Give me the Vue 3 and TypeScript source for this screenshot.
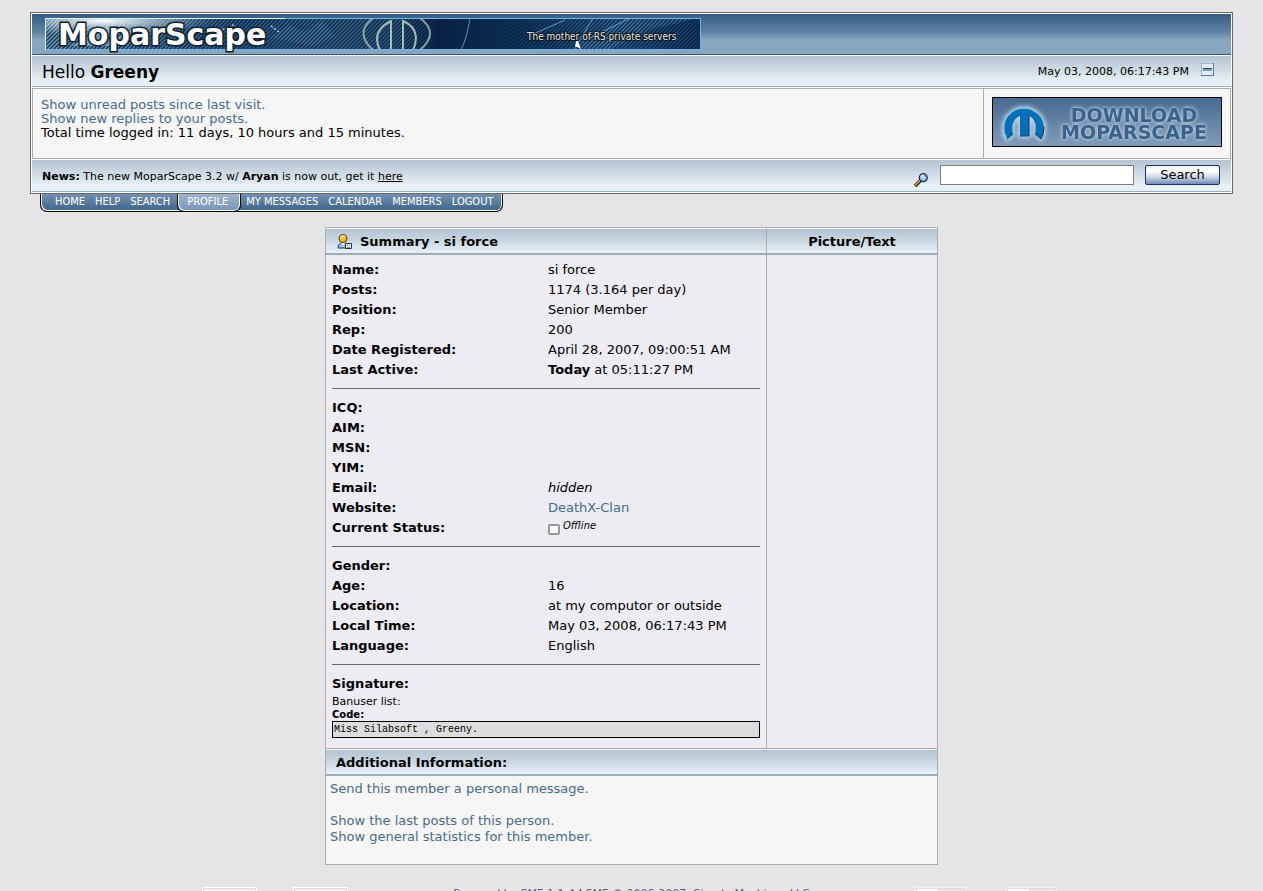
<script setup lang="ts">
interface Row {
  label: string
  value?: string
  lead?: string
  kind?: 'italic' | 'link' | 'status'
}

const menu: string[] = ['Home', 'Help', 'Search', 'Profile', 'My Messages', 'Calendar', 'Members', 'Logout']
const current = 'Profile'

const groups: Row[][] = [
  [
    { label: 'Name:', value: 'si force' },
    { label: 'Posts:', value: '1174 (3.164 per day)' },
    { label: 'Position:', value: 'Senior Member' },
    { label: 'Rep:', value: '200' },
    { label: 'Date Registered:', value: 'April 28, 2007, 09:00:51 AM' },
    { label: 'Last Active:', lead: 'Today', value: ' at 05:11:27 PM' },
  ],
  [
    { label: 'ICQ:' },
    { label: 'AIM:' },
    { label: 'MSN:' },
    { label: 'YIM:' },
    { label: 'Email:', value: 'hidden', kind: 'italic' },
    { label: 'Website:', value: 'DeathX-Clan', kind: 'link' },
    { label: 'Current Status:', value: 'Offline', kind: 'status' },
  ],
  [
    { label: 'Gender:' },
    { label: 'Age:', value: '16' },
    { label: 'Location:', value: 'at my computor or outside' },
    { label: 'Local Time:', value: 'May 03, 2008, 06:17:43 PM' },
    { label: 'Language:', value: 'English' },
  ],
]
</script>

<template>
  <div class="page">
    <header class="head">
      <div class="brand">
        <svg class="banner" width="656" height="32" viewBox="0 0 656 32" role="img" aria-label="MoparScape banner">
          <defs>
            <linearGradient id="sky" x1="0" x2="1" y1="0" y2="0">
              <stop offset="0" stop-color="#6d9dbc" />
              <stop offset=".12" stop-color="#5688ae" />
              <stop offset=".3" stop-color="#2c5b8b" />
              <stop offset=".45" stop-color="#36648c" />
              <stop offset=".54" stop-color="#2c5880" />
              <stop offset=".6" stop-color="#08264d" />
              <stop offset=".74" stop-color="#123c68" />
              <stop offset=".86" stop-color="#2b6294" />
              <stop offset="1" stop-color="#103a68" />
            </linearGradient>
            <radialGradient id="glow">
              <stop offset="0" stop-color="#fff" />
              <stop offset="1" stop-color="#bfe0f0" stop-opacity="0" />
            </radialGradient>
            <clipPath id="frame"><rect width="656" height="32" /></clipPath>
            <pattern id="hatch" width="4" height="4" patternUnits="userSpaceOnUse">
              <path d="M-1 1l2-2M0 4l4-4M3 5l2-2" stroke="#041a33" stroke-width="1.4" />
            </pattern>
          </defs>
          <g clip-path="url(#frame)">
            <rect width="656" height="32" fill="url(#sky)" />
            <path d="M225 20l20-14 14 8 18-12 12 16-20 10zM535 24l48-24h70l-50 12-40 20h-26z" fill="#5d93c4" opacity=".4" />
            <rect width="656" height="32" fill="url(#hatch)" opacity=".8" />
            <ellipse cx="58" cy="3" rx="110" ry="15" fill="url(#glow)" />
            <path d="M26 28L70 5 58 26l30-14-12 16z" fill="#d3edf5" opacity=".35" />
            <path d="M172 15l5-5 4 3 7-6 4 6 6-2M226 8l8 6" stroke="#a5d2ea" stroke-width="1.5" stroke-dasharray="2 2" fill="none" />
            <g fill="none" stroke="#a4bdb4" stroke-width="2">
              <path d="M328 0q-19 15 0 32M375 0q20 15 0 32" opacity=".8" />
              <path d="M346 2v30M358 32V3q12 5 13 16 0 7-3 13M346 3q-14 7-14 18 0 6 3 11" />
            </g>
            <path d="M425 0q-3 20-9 32M548 0l-15 25-4 7M585 0l-40 20M484 18l36-16" stroke="#82bdeb" fill="none" opacity=".7" />
            <path d="M532 20l4 11-6-3z" fill="#fff" />
            <rect x=".5" y=".5" width="655" height="31" fill="none" stroke="#6eb6e8" />
            <path d="M.5 32V.5H240" stroke="#d9f5ff" fill="none" />
          </g>
          <text class="banner-name" x="13" y="27">MoparScape</text>
          <text class="banner-tag" x="482" y="22">The mother of RS private servers</text>
        </svg>
      </div>

      <div class="greeting bar">
        <span class="hello">Hello <b>Greeny</b></span>
        <span class="date">May 03, 2008, 06:17:43 PM</span>
        <button class="collapse" type="button" aria-label="Shrink or expand the header">
          <svg width="13" height="13" viewBox="0 0 13 13" shape-rendering="crispEdges">
            <path d="M0 0h13v13H0z" fill="#5a7d9f" />
            <path d="M0 0h12v1H1v11H0z" fill="#a2b7c8" />
            <path d="M1 1h11v11H1z" fill="#e3ebf2" />
            <path d="M2 5h9v3H2z" fill="#7c9cba" /><path d="M2 5h9v1H2z" fill="#27527a" />
          </svg>
        </button>
      </div>

      <div class="info">
        <div class="links">
          <a href="#unread">Show unread posts since last visit.</a><br />
          <a href="#replies">Show new replies to your posts.</a><br />
          Total time logged in: 11 days, 10 hours and 15 minutes.
        </div>
        <div class="promo">
          <a class="download" href="#download" aria-label="Download MoparScape">
            <svg width="228" height="48" viewBox="0 0 228 48">
              <defs>
                <linearGradient id="steel" x2="0" y2="1">
                  <stop offset="0" stop-color="#486b91" />
                  <stop offset="1" stop-color="#809bb9" />
                </linearGradient>
                <filter id="halo" x="-30%" y="-30%" width="160%" height="160%">
                  <feGaussianBlur stdDeviation="2" />
                </filter>
              </defs>
              <rect width="228" height="48" fill="url(#steel)" />
              <path d="M14 41A20 20 0 1 1 48 41L42 36Q45 22 36 18V38H27V18Q17 22 20 36Z" fill="#bfd4e8" stroke="#c4d8e9" stroke-width="4" filter="url(#halo)" />
              <path d="M14 41A20 20 0 1 1 48 41L42 36Q45 22 36 18V38H27V18Q17 22 20 36Z" fill="#0570b8" />
              <path d="M14 41A20 20 0 0 1 44 15" fill="none" stroke="#86c8ec" />
              <path d="M14 41L20 36M27 38H36V18M42 36L48 41Q51 36 51 29" fill="none" stroke="#0b3c66" />
              <g class="download-text">
                <text x="141" y="24">DOWNLOAD</text>
                <text x="141" y="41">MOPARSCAPE</text>
              </g>
            </svg>
          </a>
        </div>
      </div>

      <div class="news bar">
        <p class="headline"><b>News:</b> The new MoparScape 3.2 w/ <b>Aryan</b> is now out, get it <a href="#here">here</a></p>
        <form class="search" @submit.prevent>
          <svg class="lens" width="14" height="14" viewBox="0 0 14 14">
            <path d="M1 13L7 7" stroke="#2a1605" stroke-width="3.6" />
            <path d="M1 12.5L7 6.7" stroke="#eba13a" stroke-width="1.6" />
            <circle cx="9.3" cy="4.7" r="4" fill="#a9bdf2" stroke="#242e55" stroke-width="1.2" />
            <path d="M7 3.7L9.5 2M8.5 5l2-1" stroke="#e7f7ff" stroke-width="1.4" />
            <path d="M10 2l2 2" stroke="#599a64" />
          </svg>
          <input type="text" aria-label="Search the forum" />
          <button type="submit">Search</button>
        </form>
      </div>
    </header>

    <nav class="menu">
      <a v-for="item in menu" :key="item" :href="'#' + item" :class="{ active: item === current }">{{ item }}</a>
    </nav>

    <main class="profile">
      <div class="columns">
        <section class="summary">
          <h2 class="title">
            <svg width="16" height="16" viewBox="0 0 16 16">
              <path d="M1 14Q1 9 6 9T11 14Z" fill="#91bee8" stroke="#24425f" />
              <path d="M4 9l2 3 2-3" fill="#fff" />
              <circle cx="6" cy="4.5" r="4" fill="#f3b338" stroke="#55330c" />
              <path d="M3.5 4Q5 1 8 2.5" stroke="#fff0a5" stroke-width="1.6" fill="none" />
              <path d="M8.5 9.500h6v5h-6z" fill="#fff" stroke="#252d38" />
              <path d="M10 11h1v1h-1zM12 11h1v1h-1zM10 13h3v1h-3z" fill="#74818f" />
            </svg>
            Summary - si force
          </h2>
          <div class="details">
            <template v-for="(rows, i) in groups" :key="i">
              <table>
                <tbody>
                  <tr v-for="row in rows" :key="row.label">
                    <th scope="row">{{ row.label }}</th>
                    <td>
                      <i v-if="row.kind === 'italic'">{{ row.value }}</i>
                      <a v-else-if="row.kind === 'link'" href="#site">{{ row.value }}</a>
                      <label v-else-if="row.kind === 'status'" class="status">
                        <input type="checkbox" /><i>{{ row.value }}</i>
                      </label>
                      <template v-else><b v-if="row.lead">{{ row.lead }}</b>{{ row.value }}</template>
                    </td>
                  </tr>
                </tbody>
              </table>
              <hr />
            </template>
            <h3>Signature:</h3>
            <div class="signature">
              Banuser list:
              <b>Code:</b>
              <code>Miss Silabsoft , Greeny.</code>
            </div>
          </div>
        </section>
        <section class="picture">
          <h2 class="title">Picture/Text</h2>
        </section>
      </div>
      <h2 class="title more">Additional Information:</h2>
      <div class="actions">
        <a href="#pm">Send this member a personal message.</a><br /><br />
        <a href="#posts">Show the last posts of this person.</a><br />
        <a href="#stats">Show general statistics for this member.</a>
      </div>
    </main>

    <footer class="foot">
      <div class="badges"><span class="badge"></span><span class="badge"></span></div>
      <p class="copyright"><a href="#smf">Powered by SMF 1.1.4</a> | <a href="#copy">SMF © 2006-2007, Simple Machines LLC</a></p>
      <div class="badges"><span class="badge split"></span><span class="badge split"></span></div>
    </footer>
  </div>
</template>

<style>
html {
  scrollbar-width: none;
}
body {
  background: #e5e5e7;
}
</style>

<style scoped>
* {
  box-sizing: border-box;
}
.page {
  padding: 12px 30px 0;
  font: 13px/16px Verdana, "DejaVu Sans", sans-serif;
  color: #000;
}
a {
  color: #476c8e;
  text-decoration: none;
}
.head {
  border: 1px solid #696969;
  padding: 1px;
  background: #fff;
}
.brand {
  height: 41px;
  padding: 4px 13px 0;
  border-bottom: 1px solid #375576;
  background: linear-gradient(#375d82, #5f83a7 45%, #88a6c0 65%, #88a6c0);
}
.banner {
  display: block;
  overflow: visible;
}
.banner-name {
  font-size: 30px;
  font-weight: bold;
  fill: #fff;
  stroke: #10202c;
  stroke-width: 3px;
  paint-order: stroke;
}
.banner-tag {
  font: 10px "DejaVu Sans Condensed", "DejaVu Sans", sans-serif;
  fill: #e8e8e0;
  stroke: #0a1522;
  stroke-width: 2px;
  paint-order: stroke;
}
.bar {
  display: flex;
  align-items: center;
  border-bottom: 1px solid #9baebf;
  background: linear-gradient(#b5c4d2, #cfdbe4 45%, #e6eff6 80%, #e8f0f8);
}
.greeting {
  height: 31px;
  margin: 1px 0;
  padding: 2px 17px 0 10px;
}
.hello {
  flex: 1;
  font-size: 17px;
}
.date {
  font-size: 11px;
}
.collapse {
  width: 13px;
  height: 13px;
  margin: 0 0 6px 12px;
  padding: 0;
  border: 0;
  background: none;
  line-height: 0;
}
.info {
  display: flex;
  height: 71px;
  border: 1px solid #adadad;
  background: #f6f6f6;
}
.links {
  flex: 1;
  padding: 9px 8px;
  line-height: 14px;
}
.promo {
  padding: 8px;
  border-left: 1px solid #adadad;
}
.download {
  display: block;
  border: 1px solid #000;
}
.download svg {
  display: block;
}
.download-text {
  font-size: 19px;
  font-weight: bold;
  text-anchor: middle;
  fill: #3c6289;
  filter: drop-shadow(0 0 1px #b9cde0) drop-shadow(0 0 2px #b0c6dc);
}
.news {
  height: 32px;
  margin: 1px 0 0;
  padding: 0 11px 0 10px;
}
.headline {
  flex: 1;
  margin: 0;
  padding-top: 2px;
  font-size: 11px;
}
.headline a {
  color: #000;
  text-decoration: underline;
}
.search {
  display: flex;
  align-items: center;
  padding-bottom: 2px;
}
.lens {
  margin: 10px 12px 0 0;
}
.search input {
  width: 194px;
  height: 20px;
  margin-right: 11px;
  border: 1px solid #7f7f87;
  background: #fff;
}
.search button {
  width: 75px;
  height: 20px;
  padding: 1px 0 0;
  border: 1px solid #1d3163;
  border-radius: 2px;
  background: linear-gradient(#f3f4ff, #fff 30%, #c5d0e4 65%, #7389b4);
  font: inherit;
  color: #000;
}
.menu {
  display: flex;
  width: fit-content;
  margin-left: 10px;
  height: 18px;
  padding: 0 4px 0 9px;
  border: 1px solid #000;
  border-top: 0;
  border-radius: 0 0 7px 7px;
  background: linear-gradient(#7291b1, #3e6389);
  box-shadow: inset 1px -1px #fff, inset -1px 0 #fff;
  font: 11px/15px "DejaVu Sans Condensed", "DejaVu Sans", sans-serif;
  text-transform: uppercase;
}
.menu a {
  padding: 0 5px;
  color: #fff;
}
.menu .active {
  height: 18px;
  margin-left: 2px;
  padding: 0 12px 0 9px;
  border: 1px solid #000;
  border-top: 0;
  border-radius: 0 0 7px 7px;
  background: linear-gradient(#9cb3ce, #7895b8);
  box-shadow: inset 1px -1px #fff, inset -1px 0 #fff;
}
.profile {
  max-width: 613px;
  margin: 15px auto 0;
  border: 1px solid #adadad;
  background: #ececf2;
}
.columns {
  display: flex;
}
.summary {
  flex: 1;
}
.picture {
  width: 171px;
  border-left: 1px solid #adadad;
  text-align: center;
}
.title {
  display: flex;
  align-items: center;
  height: 27px;
  margin: 0;
  padding: 2px 10px 0;
  border-top: 1px solid #fff;
  border-bottom: 2px solid #a0acb5;
  background: linear-gradient(#b2c2d0, #cbd8e2 50%, #e8f0f8);
  font-size: 13px;
}
.title svg {
  margin: 0 7px 0 1px;
}
.picture .title {
  justify-content: center;
}
.title.more {
  border-bottom-color: #9daebd;
  box-shadow: 0 -1px #adadad;
}
.details {
  padding: 5px 6px 11px;
}
table {
  width: 100%;
  border-spacing: 0;
}
th,
td {
  height: 20px;
  padding: 0;
  line-height: 18px;
  text-align: left;
  vertical-align: top;
}
table {
  margin-top: 1px;
}
th {
  width: 216px;
}
.status {
  display: flex;
  height: 18px;
  font-size: 10px;
  line-height: 14px;
}
.status input {
  appearance: none;
  width: 12px;
  height: 11px;
  margin: 5px 3px 0 0;
  border: 2px solid #999;
  border-radius: 2px;
  background: #fff;
}
hr {
  height: 1px;
  margin: 7px 0 9px;
  border: 0;
  background: #666;
}
hr + table {
  margin-top: 10px;
}
h3 {
  margin: 0;
  font-size: 13px;
  line-height: 20px;
}
.signature {
  padding-top: 1px;
  font-size: 11px;
  line-height: 13px;
}
.signature b {
  display: block;
  font-size: 10px;
}
code {
  display: block;
  height: 17px;
  padding: 0 1px;
  border: 1px solid #000;
  background: #ddd;
  font: 10px/15px "Liberation Mono", monospace;
}
.actions {
  min-height: 88px;
  padding: 5px 4px;
  background: #f6f6f6;
}
.foot {
  display: flex;
  align-items: flex-start;
  justify-content: space-between;
  padding: 22px 176px 0 172px;
}
.badges {
  display: flex;
  gap: 36px;
}
.badge {
  width: 55px;
  height: 20px;
  border: 1px solid #fff;
  background: #f3f3f3;
  box-shadow: inset 0 0 0 1px #ddd;
}
.badge.split {
  width: 51px;
  border-color: #f0f0f0;
  background: linear-gradient(90deg, #fff 45%, #e6e6e6 45%);
}
.badges:last-child {
  gap: 40px;
}
.copyright {
  margin: 0;
  font-size: 11px;
  line-height: 13px;
}
</style>
